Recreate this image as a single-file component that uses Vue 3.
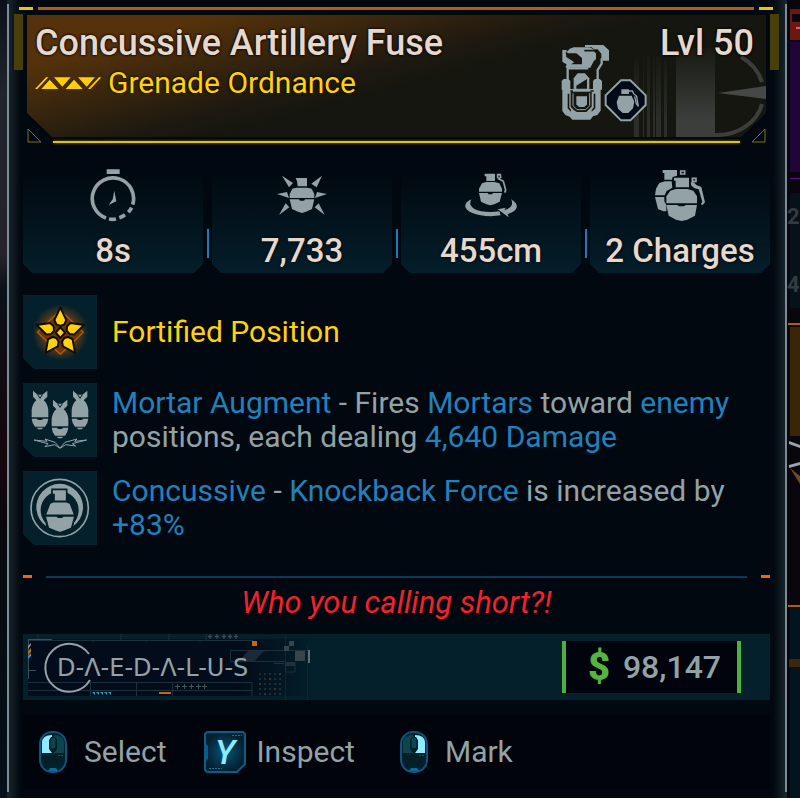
<script setup>
const stats = [
  { icon: 'timer', value: '8s' },
  { icon: 'burst', value: '7,733' },
  { icon: 'radius', value: '455cm' },
  { icon: 'charges', value: '2 Charges' },
]

const actions = [
  { icon: 'left', label: 'Select' },
  { icon: 'key', label: 'Inspect' },
  { icon: 'right', label: 'Mark' },
]

const dotRows = [0, 1, 2, 3, 4]
const starAngles = [0, 72, 144, 216, 288]
</script>

<template>
  <main class="screen">
    <div class="peek peek-left"></div>

    <article class="panel">
      <div class="rail"></div>
      <div class="body">
        <div class="topline"><i></i><b></b><i></i></div>

        <header class="head">
          <div class="tab"></div>
          <div class="plate">
            <svg class="emblem" viewBox="630 44 136 93" aria-hidden="true">
              <defs>
                <linearGradient id="fadeBlock" x1="0" y1="0" x2="0" y2="1">
                  <stop offset="0" stop-color="#3b3e3b" stop-opacity="0.1" />
                  <stop offset="0.8" stop-color="#3b3e3b" />
                </linearGradient>
              </defs>
              <g fill="url(#fadeBlock)">
                <path d="M676 48H715V137H676Z" />
                <path opacity="0.6" d="M634 60h5v77h-5zM643 56h1v81h-1zM647 56h3v81h-3zM653 56h2v81h-2zM656 56h5v81h-5zM664 60h3v77h-3z" />
              </g>
              <g fill="none" stroke="#3b3e3b" stroke-width="4">
                <path d="M741 57A44 44 0 0 1 762 82" />
                <path d="M762 104A46 40 0 0 1 715 135" />
              </g>
              <path fill="#454845" d="M718 93L766 86V99Z" />
            </svg>
            <div class="names">
              <h1>Concussive Artillery Fuse</h1>
              <div class="kind">
                <svg width="66" height="13" viewBox="103 227 198 39" aria-hidden="true">
                  <g fill="#ffce0a">
                    <path d="M103 263L136 228H143L110 263ZM122 263L147 235 173 263ZM160 228H210L185 256ZM195 263L220 235 246 263ZM232 228H283L258 256ZM262 263L295 228H302L269 263Z" />
                  </g>
                </svg>
                <h2>Grenade Ordnance</h2>
              </div>
            </div>
            <svg class="typeicon" width="88" height="78" viewBox="36 27 264 234" aria-hidden="true">
              <g fill="#93a2a6">
                <path d="M108 30H163L180 46V77H162L157 72V56L146 43H136L126 36H108Z" />
                <path d="M40 45H53V51L62 41 74 37H122L136 44 141 52V72L134 79 124 98H68L54 94 52 88 40 80Z" />
                <path d="M38 138L44 132H58L64 138V164H38ZM132 138L138 132H152L159 138V164H132Z" />
                <path d="M74 165V130L86 115H108L121 130V165Z" />
                <path d="M40 162H155V227L145 240 132 244 124 254H70L62 245 49 240 40 228Z" />
              </g>
              <path fill="#15160f" d="M50 50L58 55H82L99 69V88H66L76 82 52 66ZM82 161V152L114 132V161ZM65 170H128V215L118 225 112 231H84L74 225 65 215ZM56 176H61V218L66 224V230L56 220ZM134 176H139V220L128 230V224L134 218Z" />
              <path fill="#93a2a6" d="M82 184H114V208L106 216H90L82 208Z" />
              <path fill="none" stroke="#93a2a6" stroke-width="3" d="M72 175V212L84 224H110L122 212V175" />
              <path fill="none" stroke="#93a2a6" stroke-width="7" d="M56 92V136M158 70V86L146 105V136M51 93L62 100H118" />
              <path fill="none" stroke="#15160f" stroke-width="5" d="M106 47H136L148 58V76L137 90 132 104M64 168H72M124 168H134" />
              <path fill="#020b17" stroke="#93a2a6" stroke-width="6" d="M216 136H244L290 181V210L244 256H216L170 210V181Z" />
              <g fill="#93a2a6">
                <path d="M217 163H240V177H217ZM210 182H248L256 200 252 220 238 234H221L207 221 203 202Z" />
              </g>
              <path fill="none" stroke="#93a2a6" stroke-width="4" d="M239 168H250L254 176 263 184 268 214 262 206 257 184" />
            </svg>
            <p class="level">Lvl 50</p>
          </div>
          <div class="tab"></div>
        </header>
        <div class="underline">
          <svg width="15" height="15" viewBox="0 0 15 15" aria-hidden="true"><path d="M1 1V14H14Z" /></svg>
          <span></span>
          <svg width="15" height="15" viewBox="0 0 15 15" aria-hidden="true"><path d="M14 1V14H1Z" /></svg>
        </div>

        <ul class="stats">
          <li v-for="s in stats" :key="s.icon">
            <div class="card">
              <div class="glyph">
                <svg v-if="s.icon === 'timer'" width="48" height="54" viewBox="268 40 144 162" aria-hidden="true">
                  <path fill="#93a2a6" d="M321 44H360V58H321ZM344 108L350 140 327 151 339 134Z" />
                  <path fill="none" stroke="#93a2a6" stroke-width="11" d="M399 150A62 62 0 1 0 319 190M396 159A62 62 0 0 1 386 173M376 180A62 62 0 0 1 359 189M349 193A62 62 0 0 1 328 193" />
                </svg>
                <svg v-else-if="s.icon === 'burst'" width="52" height="42" viewBox="828 58 156 126" aria-hidden="true">
                  <path fill="#93a2a6" d="M887 70H921V95H893L891 80ZM877 102L890 99H922L935 102 943 118V130H869V118ZM869 134H897L900 138H912L915 134H943L936 163 918 171 906 175 894 171 876 163ZM846 63L879 85 867 98ZM966 63L950 98 934 87ZM831 118L861 112 867 130ZM981 118L951 112 945 130ZM837 181L857 146 868 158ZM974 181L956 146 944 158Z" />
                </svg>
                <svg v-else-if="s.icon === 'radius'" width="54" height="46" viewBox="192 50 162 138" aria-hidden="true">
                  <path fill="#93a2a6" d="M254 55H285V77H259V63H254ZM246 84L258 80H284L298 84 306 100V109H237V100ZM237 113H263L266 117H276L279 113H306L299 139 283 147 271 150 259 147 243 139Z" />
                  <path fill="none" stroke="#93a2a6" stroke-width="5" d="M293 68V58H301L302 66 296 70 310 78 317 104 314 112" />
                  <path fill="#93a2a6" d="M214 132C190 143 189 160 215 172C240 182 270 185 302 180L298 168C270 172 240 170 222 160C210 152 208 145 214 132ZM293 162L326 186 323 176C352 168 362 148 333 132C341 145 335 158 313 165L317 157Z" />
                </svg>
                <svg v-else width="52" height="53" viewBox="762 42 156 159" aria-hidden="true">
                  <path fill="#93a2a6" d="M788 45H831V62L818 66 816 74H793V54H788ZM778 84L795 79H815L817 98 800 108 794 121H765L768 101ZM765 126H793V139L799 150V169L790 169 774 162Z" />
                  <path fill="none" stroke="#93a2a6" stroke-width="5" d="M842 48H854V57H842ZM877 70H888V79H877Z" />
                  <path fill="#93a2a6" d="M822 68H867V97H827V77H822ZM811 107L828 102H862L880 107 891 124V145H799V124ZM799 150H832L837 154H852L857 150H891L885 182 862 194 845 198 828 194 806 182ZM872 82H882L889 90 904 96 915 142 907 151 903 147 907 140 896 103 884 100 874 92Z" />
                </svg>
              </div>
              <strong>{{ s.value }}</strong>
            </div>
          </li>
        </ul>

        <ul class="perks">
          <li>
            <svg class="badge" viewBox="24 30 222 222" aria-hidden="true">
              <defs>
                <radialGradient id="starGlow">
                  <stop offset="0.3" stop-color="#b95c08" stop-opacity="0.8" />
                  <stop offset="1" stop-color="#b95c08" stop-opacity="0" />
                </radialGradient>
              </defs>
              <circle cx="136" cy="142" r="84" fill="url(#starGlow)" />
              <path fill="#6a3606" stroke="#b25b0a" stroke-width="4" d="M136 76L205 142 136 208 67 142Z" />
              <g fill="#ffd20a" stroke="#120b05" stroke-width="6" stroke-linejoin="round">
                <path v-for="a in starAngles" :key="a" :transform="`rotate(${a} 136 143)`" d="M136 68L154 105 148 118 136 123 124 118 118 105Z" />
                <path d="M136 127L150 143 136 159 122 143Z" />
              </g>
            </svg>
            <p class="gold">Fortified Position</p>
          </li>
          <li>
            <svg class="badge" viewBox="24 295 222 222" aria-hidden="true">
              <g v-for="p in [[0, 0], [60, 27], [120, 0]]" :key="p[0]" :transform="`translate(${p[0]} ${p[1]})`">
                <path fill="#93a2a6" d="M54 318L68 330H82L97 318V336L86 347Q98 357 100 376V398H50V376Q52 357 64 347L54 336ZM50 402H66L69 406H81L84 402H100Q98 418 90 426H60Q52 418 50 402ZM65 429H85L80 434H70Z" />
                <path stroke="#04202b" stroke-width="3" d="M68 330L75 341 82 330" fill="none" />
              </g>
              <path fill="none" stroke="#93a2a6" stroke-width="3" d="M57 466L96 470 90 463 120 473 135 490 150 473 186 463 179 470 215 466 172 477 182 484 152 480 135 491 119 480 90 486 99 477Z" />
            </svg>
            <p><em>Mortar Augment</em> - Fires <em>Mortars</em> toward <em>enemy</em> positions, each dealing <em>4,640 Damage</em></p>
          </li>
          <li>
            <svg class="badge" viewBox="24 561 222 222" aria-hidden="true">
              <circle cx="134" cy="672" r="86" fill="none" stroke="#93a2a6" stroke-width="5" />
              <path fill="#93a2a6" d="M94 727A70 70 0 1 1 174 727L177 716A57 57 0 1 0 91 716Z" />
              <path fill="#93a2a6" stroke="#04202b" stroke-width="5" d="M111 616H155V653H117V632H111ZM104 658L118 652H151L166 658 180 694H90ZM90 696H180L170 733 150 741 135 746 120 741 100 733Z" />
              <path fill="#04202b" d="M124 696H146L142 702H128Z" />
            </svg>
            <p><em>Concussive</em> - <em>Knockback Force</em> is increased by <em>+83%</em></p>
          </li>
        </ul>

        <div class="divider"><i></i><b></b><i></i></div>
        <p class="flavor">Who you calling short?!</p>

        <section class="maker">
          <svg class="brand" width="290" height="66" viewBox="0 0 290 66" role="img" aria-label="Daedalus">
            <defs>
              <linearGradient id="brandFade" x1="0" y1="0" x2="1" y2="0">
                <stop offset="0.75" stop-color="#020c1a" />
                <stop offset="1" stop-color="#020c1a" stop-opacity="0.1" />
              </linearGradient>
            </defs>
            <rect x="5" y="5" width="281" height="57" fill="url(#brandFade)" />
            <g fill="none" stroke="#1b303b">
              <path d="M15 0V6M98 0V6M146 0V6M183 0V6M70 6V8M123 6V8M177 6V8M5 6.500H230M5 48.500H229V62M5 56.500H229M67.500 48V62M113.500 48V62M149.500 48V62M207.500 16.500H285M207.500 16V27.500H262M262.500 28V38H272V28" />
              <path opacity="0.5" d="M262.500 0V66M284.500 10V66" />
            </g>
            <path fill="#3d4e57" d="M5 5H29V6H6V45H5ZM5 36H13V37H5Z" />
            <path fill="#5d6d74" d="M285 16H287V29H285Z" />
            <path fill="#1a2a36" d="M225 17H241L231 28H215Z" />
            <path stroke="#43545a" fill="none" d="M185 2.500h4M187 0v5M192 2.500h4M194 0v5M199 2.500h4M201 0v5M205 2.500h4M207 0v5M211 2.500h4M213 0v5M152 52.500h5M154.500 50v5M159 52.500h5M161.500 50v5M166 52.500h5M168.500 50v5M173 52.500h5M175.500 50v5M179 52.500h5M181.500 50v5" />
            <path fill="#c56514" d="M229 7H234V12H229ZM136 58H148V60H136ZM5 17L8 14V18L5 21Z" />
            <path fill="#36454c" d="M266 7H271V12H266ZM261 12H266V17H261ZM272 17H282V27H272Z" />
            <path fill="#1f323b" d="M262 28H272V32H262ZM251 29H261V30H251Z" />
            <path fill="#2b9ac2" d="M69 58h3v3zM73 58h3v3zM77 58h3v3zM81 58h3v3zM85 58h3v3zM5 22L8 19V22L5 25Z" />
            <path fill="#8b999e" d="M5 12L8 9V11L5 15Z" />
            <g v-for="r in dotRows" :key="r">
              <circle v-for="c in dotRows" :key="c" :cx="237 + c * 5" :cy="40 + r * 5" r="0.8" :fill="(r * 2 + c) % 5 === 4 ? '#8f5a30' : '#35505e'" />
            </g>
            <path fill="none" stroke="#93a2a6" stroke-width="2" d="M66 20A24 24 0 1 0 67 46" />
            <text x="34" y="42">D-Λ-E-D-Λ-L-U-S</text>
          </svg>
          <p class="price"><span>$</span>98,147</p>
        </section>

        <nav class="actions">
          <button v-for="a in actions" :key="a.label" type="button">
            <svg v-if="a.icon === 'key'" width="42" height="42" viewBox="0 0 42 42" aria-hidden="true">
              <defs>
                <radialGradient id="keyFill">
                  <stop offset="0" stop-color="#07557a" />
                  <stop offset="1" stop-color="#03202f" />
                </radialGradient>
              </defs>
              <path fill="url(#keyFill)" stroke="#0d5c87" stroke-width="2" d="M3 1H39L41 3V33L33 41H3L1 39V3Z" />
              <path fill="#0d5c87" d="M1 12L4 15V28L1 31Z" />
              <path stroke="#12719a" stroke-dasharray="2 1" d="M28 4.500H38M5 37.500H18" />
              <text class="keycap" x="21" y="33" text-anchor="middle">Y</text>
            </svg>
            <svg v-else width="42" height="42" viewBox="-7 0 42 42" aria-hidden="true">
              <rect x="1" y="1" width="26" height="40" rx="12" fill="#032028" stroke="#0d5380" stroke-width="2" />
              <path :fill="a.icon === 'left' ? '#8deaff' : '#0b4650'" d="M3 22V12Q3 4 13 4V7L10 9V18L13 22Z" />
              <path :fill="a.icon === 'right' ? '#8deaff' : '#0b4650'" d="M25 22V12Q25 4 15 4V7L18 9V18L15 22Z" />
              <rect x="11" y="6" width="6" height="12" rx="3" fill="#0b4650" stroke="#031a22" stroke-width="1" />
              <path fill="#0d6aa0" d="M9 40L11 37H17L19 40Z" />
              <path stroke="#0d5380" stroke-dasharray="2 1" d="M19 24.500H24" />
            </svg>
            <span>{{ a.label }}</span>
          </button>
        </nav>
      </div>
      <div class="rail"></div>
    </article>

    <div class="peek peek-right">
      <svg viewBox="787 0 13 798" preserveAspectRatio="xMinYMin slice" aria-hidden="true">
        <path fill="#09060d" d="M787 0H800V798H787Z" />
        <path fill="#6c1710" d="M790 9H800V14H792V22H800V40H790Z" />
        <path fill="#d8607c" d="M796 27H800V29H796Z" />
        <path fill="#220538" d="M790 42H800V172H790Z" />
        <path fill="#5b0d87" d="M790 178H800V179H790Z" />
        <path fill="#07111a" d="M790 193H800V308H790Z" />
        <path fill="#b45c09" d="M788 323H800V325H788ZM788 605H800V607H788Z" />
        <path fill="#3c2406" d="M790 327H800V436H790Z" />
        <path fill="#96a6ab" d="M789 441L800 445V448L789 444ZM789 465L800 462V465L789 468Z" />
        <path fill="#6d4a23" d="M790 468L800 476V484Z" />
        <path fill="#04141e" d="M790 608H800V798H790Z" />
        <path fill="#3b280c" d="M789 659H800V667H789Z" />
        <g class="under"><text x="787" y="224">2</text><text x="787" y="292">4</text></g>
      </svg>
    </div>
  </main>
</template>

<style>
body {
  margin: 0;
  background: #01080f;
}
</style>

<style scoped>
.screen {
  min-height: 100vh;
  display: grid;
  grid-template-columns: 7px minmax(0, 1fr) 13px;
  background: #01080f;
  font-family: Roboto, "Liberation Sans", sans-serif;
  color: #93a2a6;
}
h1, h2, p, ul {
  margin: 0;
  padding: 0;
}
ul {
  list-style: none;
}
svg {
  display: block;
  flex: none;
}
.peek {
  position: relative;
  overflow: hidden;
}
.peek-left {
  background: linear-gradient(#0b1119, #20242d 12%, #25232c 32%, #0a1119 36%, #16060c 58%, #08090d 66%, #04101a);
}
.peek-right svg {
  position: absolute;
  inset: 0;
  width: 100%;
  height: 100%;
}
.under {
  font-size: 22px;
  font-weight: 700;
  fill: #333b42;
}
.panel {
  display: flex;
  background: linear-gradient(90deg, #1b262e, #01080f 14px, #01080f calc(100% - 14px), #1b262e);
}
.rail {
  flex: none;
  width: 2px;
  margin: 4px 0 6px;
  background: #7b8c96;
}
.body {
  flex: 1;
  min-width: 0;
  padding: 7px 6px 8px 5px;
}
.topline {
  display: flex;
  gap: 5px;
  height: 3px;
  padding: 0 6px 0 5px;
}
.topline i {
  width: 14px;
  background: #e8c500;
}
.topline b {
  flex: 1;
  background: #b35e08;
}
.head {
  display: flex;
  gap: 4px;
  margin-top: 4px;
}
.tab {
  flex: none;
  width: 9px;
  height: 56px;
  background: #494009;
}
.plate {
  position: relative;
  flex: 1;
  display: flex;
  height: 122px;
  box-sizing: border-box;
  padding: 0 12px 0 8px;
  margin-top: 1px;
  background: linear-gradient(165deg, #55320b 16%, #1d1910 46%, #15160f 54%);
  clip-path: polygon(0 0, 100% 0, 100% 98px, calc(100% - 25px) 100%, 25px 100%, 0 98px);
}
.emblem {
  position: absolute;
  right: 0;
  bottom: 0;
  width: 136px;
  height: 93px;
}
.names {
  flex: 1;
  padding-top: 8px;
}
h1, .level {
  font-size: 36px;
  line-height: 40px;
  font-weight: 500;
  color: #e6d8cd;
  text-shadow: 0 0 3px #000, 0 0 2px #000;
  white-space: nowrap;
}
.kind {
  display: flex;
  align-items: center;
  gap: 7px;
}
h2 {
  font-size: 30px;
  line-height: 40px;
  font-weight: 400;
  color: #ffd20a;
  text-shadow: 0 0 3px #000;
}
.typeicon {
  position: relative;
  margin: 29px 11px 0 0;
}
.level {
  position: relative;
  padding-top: 8px;
}
.underline {
  position: relative;
  display: flex;
  align-items: flex-end;
  justify-content: space-between;
  gap: 11px;
  margin: -9px 13px 0;
}
.underline path {
  fill: none;
  stroke: #80700e;
  stroke-width: 1;
}
.underline span {
  flex: 1;
  height: 2px;
  background: #e2c010;
  box-shadow: 0 0 3px #8b7706;
}
.stats {
  display: grid;
  grid-template-columns: repeat(4, minmax(0, 1fr));
  gap: 9px;
  margin: 25px 9px 0;
}
.stats li {
  position: relative;
}
.stats li:not(:last-child)::after {
  content: "";
  position: absolute;
  right: -6px;
  bottom: 15px;
  width: 2px;
  height: 29px;
  background: #147fbd;
}
.card {
  display: flex;
  flex-direction: column;
  align-items: center;
  gap: 9px;
  padding-bottom: 2px;
  background: linear-gradient(#01080f, #041e2a);
  clip-path: polygon(0 0, 100% 0, 100% calc(100% - 9px), calc(100% - 9px) 100%, 9px 100%, 0 calc(100% - 9px));
}
.glyph {
  display: flex;
  align-items: center;
  height: 54px;
}
.card strong {
  font-size: 33px;
  line-height: 40px;
  font-weight: 500;
  color: #e6d8cd;
  text-shadow: 0 0 3px #000;
  white-space: nowrap;
}
.perks {
  display: grid;
  gap: 14px;
  margin: 22px 9px 0;
}
.perks li {
  display: flex;
  align-items: center;
  gap: 15px;
  height: 74px;
}
.badge {
  width: 74px;
  height: 74px;
  background: #04202b;
  clip-path: polygon(0 0, 100% 0, 100% 100%, 11px 100%, 0 calc(100% - 11px));
}
.perks p {
  font-size: 30px;
  line-height: 34px;
}
.perks em {
  font-style: normal;
  color: #2181bd;
}
.perks .gold {
  color: #ffd20a;
}
.divider {
  display: flex;
  align-items: center;
  gap: 14px;
  margin: 30px 9px 0;
}
.divider i {
  width: 9px;
  height: 3px;
  background: #f26608;
}
.divider b {
  flex: 1;
  height: 2px;
  background: #083b57;
}
.flavor {
  margin-top: 7px;
  font-size: 31px;
  line-height: 36px;
  font-style: italic;
  text-align: center;
  color: #f3202e;
}
.maker {
  display: flex;
  align-items: center;
  justify-content: space-between;
  margin: 13px 9px 0;
  padding-right: 29px;
  background: #04202b;
}
.brand text {
  font-family: "DejaVu Sans", sans-serif;
  font-size: 24px;
  fill: #93a2a6;
}
.price {
  display: flex;
  align-items: center;
  gap: 13px;
  padding: 0 16px 0 22px;
  border: solid #50b03c;
  border-width: 0 4px;
  background: #01040d;
  font-size: 32px;
  line-height: 52px;
  font-weight: 500;
}
.price span {
  font-size: 38px;
  font-weight: 900;
  color: #55b53f;
}
.actions {
  display: flex;
  gap: 38px;
  margin: 15px 9px 0;
  padding: 16px 9px;
  background: #01040b;
}
.actions button {
  display: flex;
  align-items: center;
  gap: 10px;
  padding: 0;
  border: 0;
  background: none;
  color: inherit;
  font: inherit;
  font-size: 30px;
  line-height: 42px;
  cursor: pointer;
}
.keycap {
  font-size: 34px;
  font-style: italic;
  font-weight: 500;
  fill: #8deaff;
}
</style>
